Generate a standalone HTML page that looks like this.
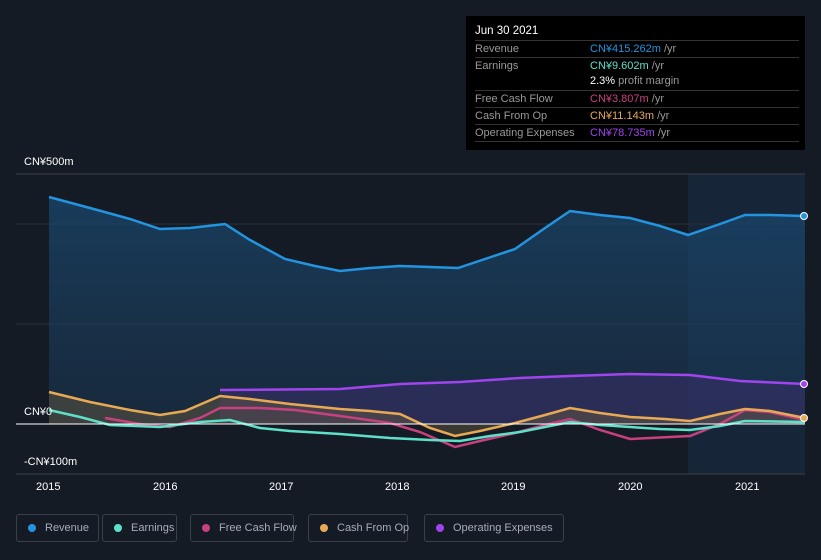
<!DOCTYPE html>
<html><head><meta charset="utf-8"><style>
body{margin:0;width:821px;height:560px;background:#151b25;font-family:"Liberation Sans",sans-serif;overflow:hidden;position:relative}
.tt{position:absolute;left:466px;top:16px;width:339px;height:134px;background:#000;color:#fff;font-size:11px}
.tt .d{position:absolute;left:9px;top:9px;font-size:11.5px}
.row{position:absolute;left:9px;width:324px;border-top:1px solid #333;height:16px;line-height:16px;color:#999}
.row span{position:absolute;left:115px}
.lg{position:absolute;top:514px;height:28px;border:1px solid #3a3f48;border-radius:3px;color:#aab;font-size:11px;line-height:26px;box-sizing:border-box;padding-left:28px;white-space:nowrap}
.lg i{position:absolute;left:11px;top:9px;width:8px;height:8px;border-radius:50%}
.ax{position:absolute;color:#fff;font-size:11px}
</style></head><body>
<svg width="821" height="500" style="position:absolute;left:0;top:0">
<defs><linearGradient id="g" x1="0" y1="0" x2="0" y2="1"><stop offset="0" stop-color="#1a4a72" stop-opacity=".7"/><stop offset="1" stop-color="#1a3a58" stop-opacity=".45"/></linearGradient></defs>
<rect x="688" y="174" width="117" height="300" fill="#172538"/>
<line x1="16" y1="174" x2="805" y2="174" stroke="#3a3f48"/>
<line x1="16" y1="224" x2="805" y2="224" stroke="#2a303a"/>
<line x1="16" y1="324" x2="805" y2="324" stroke="#2a303a"/>
<line x1="16" y1="474" x2="805" y2="474" stroke="#3a3f48"/>
<path d="M49,197 L90,208 130,219 160,229 190,228 225,224 250,240 285,259 315,266 340,271 370,268 400,266 430,267 458,268 485,259 515,249 545,228 570,211 600,215 630,218 660,226 688,235 720,224 745,215 770,215 805,216 L805,424 L49,424Z" fill="url(#g)"/>
<path d="M220,390 L340,389 400,384 460,382 520,378 570,376 630,374 690,375 740,381 805,384 L805,424 220,424Z" fill="#3b2f6a" opacity=".55"/>
<path d="M49,392 L90,402 130,410 160,415 185,411 220,396 250,399 290,404 340,409 370,411 400,414 430,428 455,436 480,431 515,423 545,415 570,408 600,413 630,417 665,419 690,421 720,414 745,409 770,411 805,418 L805,424 49,424Z" fill="#6a5a40" opacity=".45"/>
<path d="M105,418 L140,424 170,427 200,418 220,408 260,408 295,410 340,416 390,423 420,432 455,447 480,441 515,433 545,425 570,419 600,430 630,439 690,436 720,424 745,410 770,412 805,420" fill="none" stroke="#c8417f" stroke-width="2.5"/>
<path d="M49,197 L90,208 130,219 160,229 190,228 225,224 250,240 285,259 315,266 340,271 370,268 400,266 430,267 458,268 485,259 515,249 545,228 570,211 600,215 630,218 660,226 688,235 720,224 745,215 770,215 805,216" fill="none" stroke="#2394df" stroke-width="2.5"/>
<path d="M220,390 L340,389 400,384 460,382 520,378 570,376 630,374 690,375 740,381 805,384" fill="none" stroke="#a044ee" stroke-width="2.5"/>
<path d="M49,392 L90,402 130,410 160,415 185,411 220,396 250,399 290,404 340,409 370,411 400,414 430,428 455,436 480,431 515,423 545,415 570,408 600,413 630,417 665,419 690,421 720,414 745,409 770,411 805,418" fill="none" stroke="#e8a955" stroke-width="2.5"/>
<path d="M49,410 L80,417 110,425 160,427 200,422 230,420 260,428 290,431 340,434 390,438 430,440 460,441 490,436 520,432 545,427 570,422 600,425 630,427 660,429 690,430 720,426 745,421 805,422" fill="none" stroke="#5ee0c8" stroke-width="2.5"/>
<line x1="16" y1="424" x2="805" y2="424" stroke="#fff" stroke-width="1"/>
<circle cx="804" cy="216" r="3.5" fill="#2394df" stroke="#fff"/>
<circle cx="804" cy="384" r="3.5" fill="#a044ee" stroke="#fff"/>
<circle cx="804" cy="418" r="3.5" fill="#e8a955" stroke="#fff"/>
</svg>
<div class="ax" style="left:24px;top:156px">CN¥500m</div>
<div class="ax" style="left:24px;top:406px">CN¥0</div>
<div class="ax" style="left:24px;top:456px">-CN¥100m</div>
<div class="ax" style="left:36px;top:481px">2015</div>
<div class="ax" style="left:153px;top:481px">2016</div>
<div class="ax" style="left:269px;top:481px">2017</div>
<div class="ax" style="left:385px;top:481px">2018</div>
<div class="ax" style="left:501px;top:481px">2019</div>
<div class="ax" style="left:618px;top:481px">2020</div>
<div class="ax" style="left:735px;top:481px">2021</div>
<div class="tt"><div class="d">Jun 30 2021</div>
<div class="row" style="top:24px">Revenue<span style="color:#2394df">CN¥415.262m <b style="font-weight:normal;color:#999">/yr</b></span></div>
<div class="row" style="top:41px">Earnings<span style="color:#5ee0c8">CN¥9.602m <b style="font-weight:normal;color:#999">/yr</b></span></div>
<div class="row" style="top:57px;border:none"><span style="color:#fff">2.3% <b style="font-weight:normal;color:#999">profit margin</b></span></div>
<div class="row" style="top:74px">Free Cash Flow<span style="color:#c8417f">CN¥3.807m <b style="font-weight:normal;color:#999">/yr</b></span></div>
<div class="row" style="top:91px">Cash From Op<span style="color:#e8a955">CN¥11.143m <b style="font-weight:normal;color:#999">/yr</b></span></div>
<div class="row" style="top:108px;border-bottom:1px solid #333">Operating Expenses<span style="color:#a044ee">CN¥78.735m <b style="font-weight:normal;color:#999">/yr</b></span></div>
</div>
<div class="lg" style="left:16px;width:83px"><i style="background:#2394df"></i>Revenue</div>
<div class="lg" style="left:102px;width:75px"><i style="background:#5ee0c8"></i>Earnings</div>
<div class="lg" style="left:190px;width:104px"><i style="background:#c8417f"></i>Free Cash Flow</div>
<div class="lg" style="left:308px;width:100px"><i style="background:#e8a955"></i>Cash From Op</div>
<div class="lg" style="left:424px;width:140px"><i style="background:#a044ee"></i>Operating Expenses</div>
</body></html>
